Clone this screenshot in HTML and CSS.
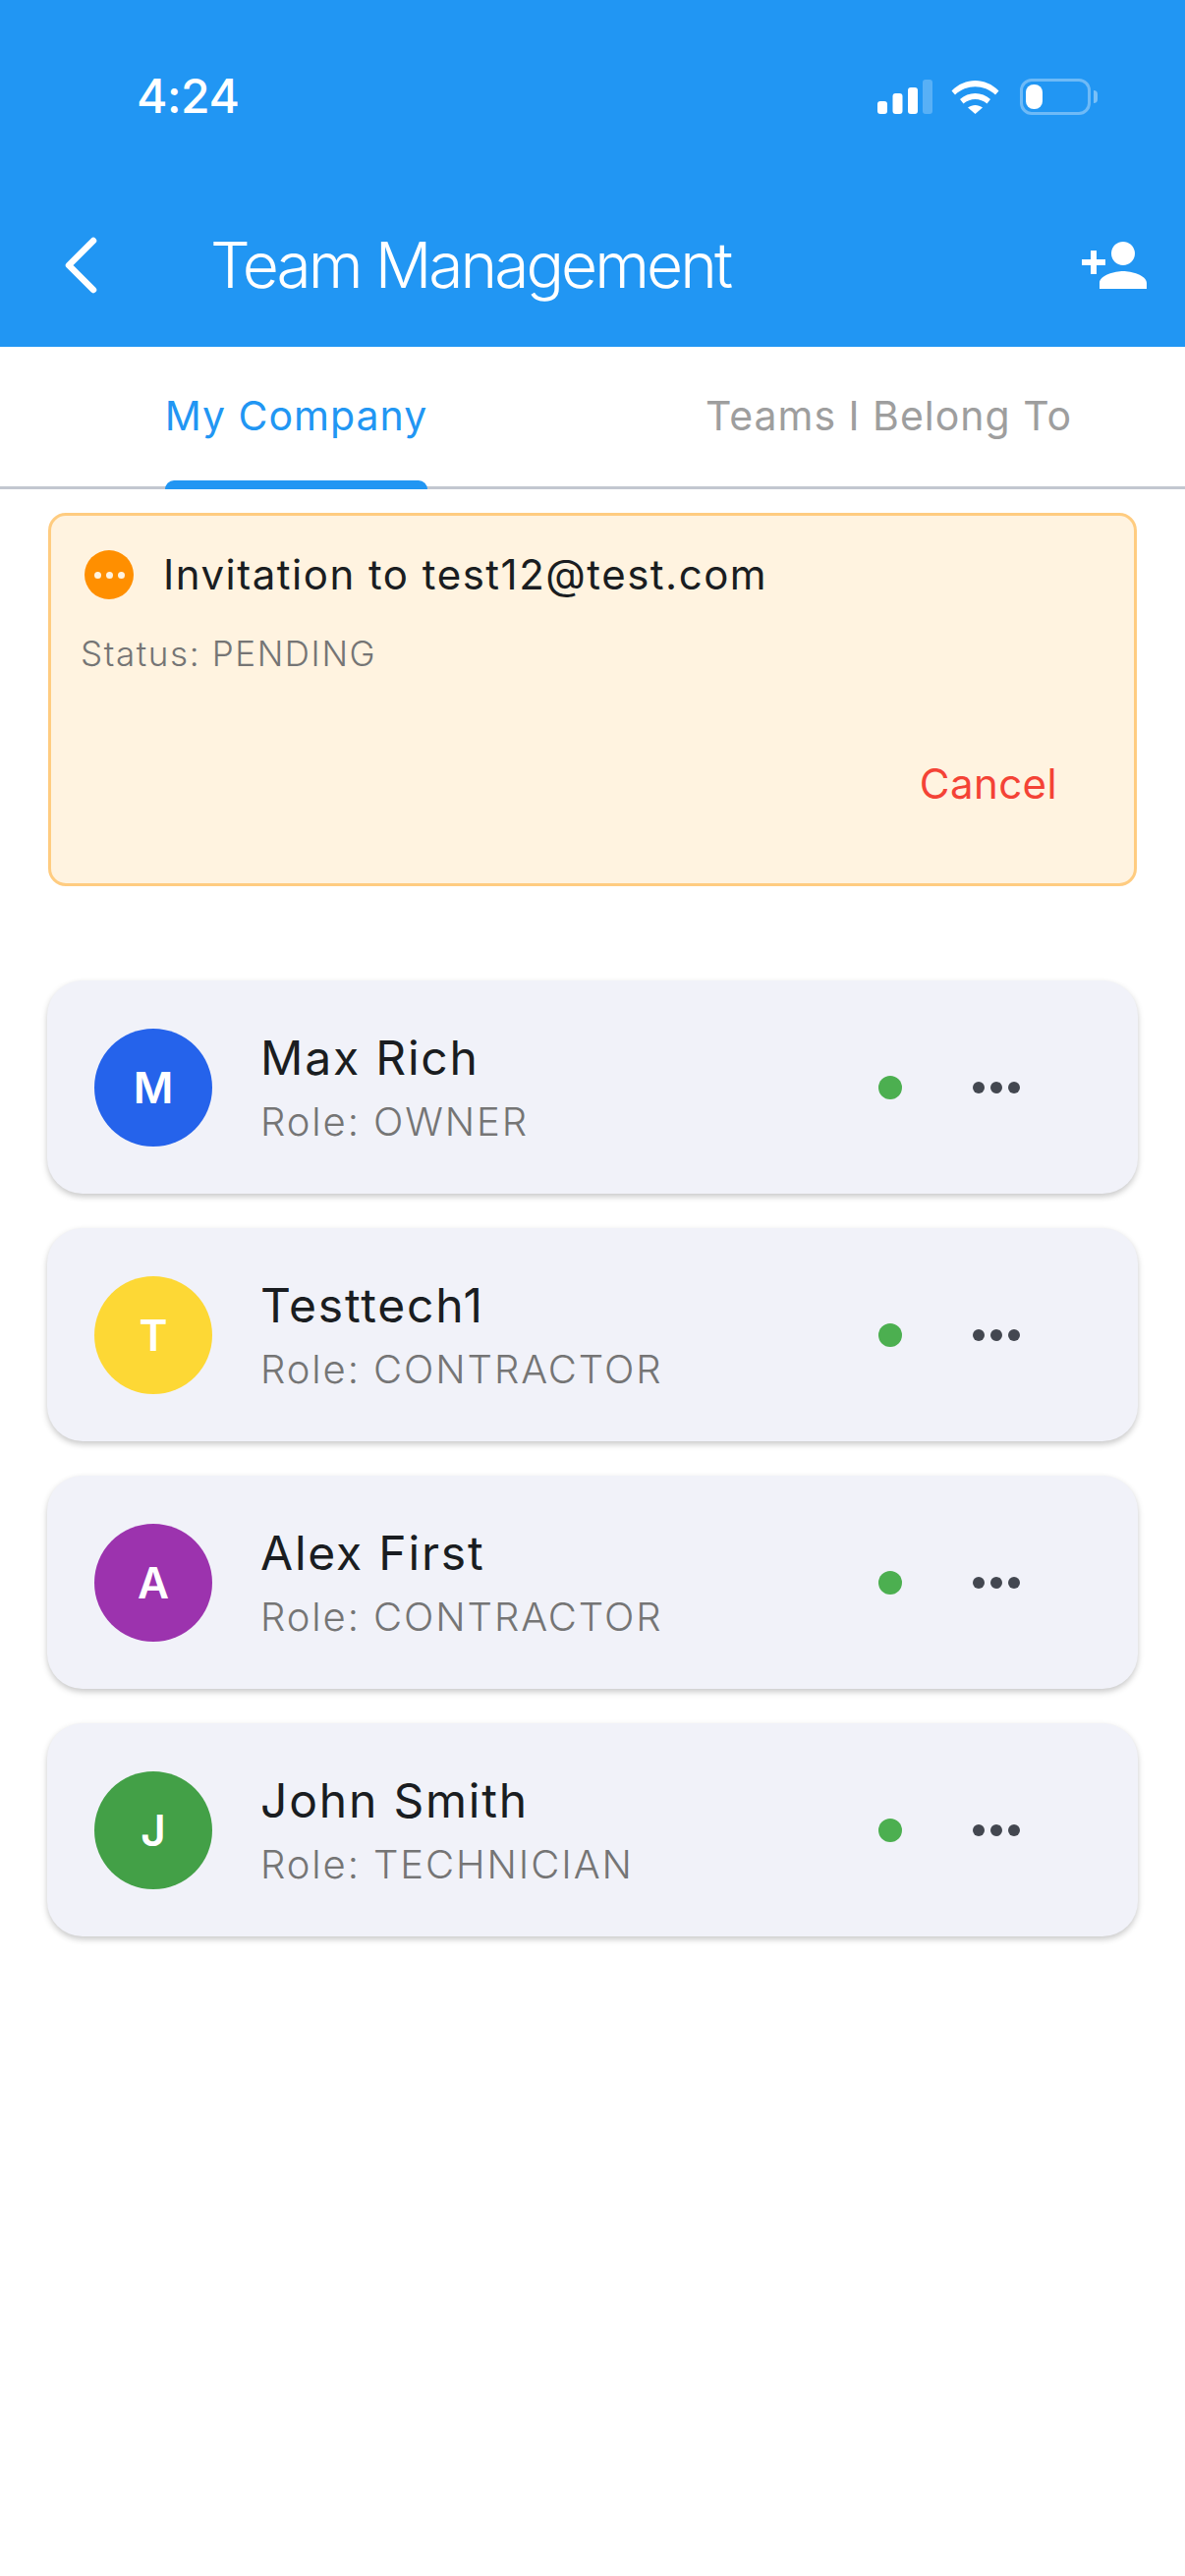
FILE: index.html
```html
<!doctype html>
<html lang="en">
  <head>
    <meta charset="UTF-8" />
    <meta name="viewport" content="width=device-width, initial-scale=1.0" />
    <title>Team Management</title>
    <link rel="stylesheet" href="styles.css">
  </head>
  <body>
    <header class="app-header">
      <div class="status-bar">
        <span class="status-time">4:24</span>
        <div class="status-icons">
          <svg class="signal-icon" width="56" height="35" viewBox="0 0 56 35">
            <rect x="0" y="22" width="10" height="13" rx="3" fill="#fff" />
            <rect x="15.5" y="14" width="10" height="21" rx="3" fill="#fff" />
            <rect x="31" y="8" width="10" height="27" rx="3" fill="#fff" />
            <rect x="46" y="0" width="10" height="35" rx="3" fill="#fff" opacity="0.25" />
          </svg>
          <svg class="wifi-icon" width="49" height="35" viewBox="0 0 49 35">
            <path d="M0.5 11.5C14 -2.5 35 -2.5 48.500 11.500L45 15.500C33.500 4.500 15.500 4.500 4 15.500Z" fill="#fff" />
            <path d="M9 20C17.500 12 31.500 12 40 20L36.500 24.500C29.500 18.500 19.500 18.500 12.500 24.500Z" fill="#fff" />
            <path d="M17 28.500C21.500 25 27.500 25 32 28.500L24.500 35Z" fill="#fff" />
          </svg>
          <div class="battery">
            <div class="battery-body">
              <div class="battery-level"></div>
            </div>
            <div class="battery-cap"></div>
          </div>
        </div>
      </div>
      <div class="nav-bar">
        <svg class="back-icon" width="36" height="58" viewBox="0 0 36 58">
          <path d="M31 4L6 29L31 54" fill="none" stroke="#fff" stroke-width="6.500" stroke-linecap="round" stroke-linejoin="round" />
        </svg>
        <h1 class="nav-title">Team Management</h1>
        <svg class="add-icon" width="72" height="72" viewBox="0 0 24 24">
          <path fill="#fff" d="M15 12c2.210 0 4-1.790 4-4s-1.790-4-4-4-4 1.790-4 4 1.790 4 4 4zm-9-2V7H4v3H1v2h3v3h2v-3h3v-2H6zm9 4c-2.670 0-8 1.340-8 4v2h16v-2c0-2.660-5.330-4-8-4z" />
        </svg>
      </div>
    </header>

    <nav class="tab-bar">
      <div class="tab tab-active"><span class="tab-label">My Company</span></div>
      <div class="tab"><span class="tab-label">Teams I Belong To</span></div>
    </nav>

    <main class="content">
      <section class="invite-card">
        <div class="invite-head">
          <div class="invite-icon">
            <span class="invite-dot"></span>
            <span class="invite-dot"></span>
            <span class="invite-dot"></span>
          </div>
          <span class="invite-title">Invitation to test12@test.com</span>
        </div>
        <p class="invite-status">Status: PENDING</p>
        <div class="invite-actions">
          <span class="invite-cancel">Cancel</span>
        </div>
      </section>

      <section class="member-list">
        <article class="member-card">
          <div class="avatar avatar-blue">M</div>
          <div class="member-info">
            <div class="member-name">Max Rich</div>
            <div class="member-role">Role: OWNER</div>
          </div>
          <span class="online-dot"></span>
          <div class="more-btn"><span></span><span></span><span></span></div>
        </article>
        <article class="member-card">
          <div class="avatar avatar-yellow">T</div>
          <div class="member-info">
            <div class="member-name">Testtech1</div>
            <div class="member-role">Role: CONTRACTOR</div>
          </div>
          <span class="online-dot"></span>
          <div class="more-btn"><span></span><span></span><span></span></div>
        </article>
        <article class="member-card">
          <div class="avatar avatar-purple">A</div>
          <div class="member-info">
            <div class="member-name">Alex First</div>
            <div class="member-role">Role: CONTRACTOR</div>
          </div>
          <span class="online-dot"></span>
          <div class="more-btn"><span></span><span></span><span></span></div>
        </article>
        <article class="member-card">
          <div class="avatar avatar-green">J</div>
          <div class="member-info">
            <div class="member-name">John Smith</div>
            <div class="member-role">Role: TECHNICIAN</div>
          </div>
          <span class="online-dot"></span>
          <div class="more-btn"><span></span><span></span><span></span></div>
        </article>
      </section>
    </main>
  </body>
</html>
```

FILE: styles.css
```css
* {
  margin: 0;
  padding: 0;
  box-sizing: border-box;
}

html,
body {
  height: 100%;
  overflow: hidden;
  background: #fff;
  font-family: "Inter", sans-serif;
}

.app-header {
  height: 353px;
  background: #2196f3;
  color: #fff;
  display: flex;
  flex-direction: column;
}

.status-bar {
  height: 234px;
  padding: 76px 89px 0 139px;
  display: flex;
  justify-content: space-between;
  align-items: flex-start;
}

.status-time {
  font-size: 48px;
  font-weight: 500;
  letter-spacing: -0.5px;
  line-height: 44px;
}

.status-icons {
  display: flex;
  align-items: center;
  gap: 19px;
  margin-top: 4px;
}

.signal-icon,
.wifi-icon {
  display: block;
}

.battery {
  display: flex;
  align-items: center;
  gap: 3px;
  margin-left: 2px;
}

.battery-body {
  width: 72px;
  height: 37px;
  border: 3px solid rgba(255, 255, 255, 0.35);
  border-radius: 12px;
  padding: 3px;
}

.battery-level {
  width: 17px;
  height: 100%;
  background: #fff;
  border-radius: 8px;
}

.battery-cap {
  width: 4px;
  height: 13px;
  background: rgba(255, 255, 255, 0.4);
  border-radius: 0 4px 4px 0;
}

.nav-bar {
  display: flex;
  align-items: flex-start;
  padding: 0 36px 0 64px;
}

.back-icon {
  margin-top: 7px;
  flex-shrink: 0;
}

.nav-title {
  flex: 1;
  margin-left: 114px;
  font-size: 64px;
  font-weight: 300;
  letter-spacing: -2.950px;
  line-height: 72px;
  white-space: nowrap;
}

.tab-bar {
  height: 145px;
  display: flex;
  border-bottom: 3px solid #c2c7d0;
}

.tab {
  width: 50%;
  display: flex;
  justify-content: center;
  color: #9e9e9e;
}

.tab-label {
  position: relative;
  display: block;
  padding-top: 45px;
  font-size: 41px;
  line-height: 50px;
  letter-spacing: 1px;
  white-space: nowrap;
}

.tab-active {
  color: #2196f3;
}

.tab-active .tab-label::after {
  content: "";
  position: absolute;
  left: 0;
  right: 0;
  top: 136px;
  height: 9px;
  background: #2196f3;
  border-radius: 9px 9px 0 0;
}

.content {
  padding: 24px 48px 0 48px;
}

.invite-card {
  height: 380px;
  margin: 0 1px;
  background: #fff3e0;
  border: 3px solid #ffcc80;
  border-radius: 18px;
  padding: 35px 31px 0 30px;
}

.invite-head {
  display: flex;
  align-items: center;
  gap: 30px;
  padding-left: 4px;
}

.invite-icon {
  width: 50px;
  height: 50px;
  border-radius: 50%;
  background: #ff8f00;
  display: flex;
  align-items: center;
  justify-content: center;
  gap: 5px;
}

.invite-dot {
  width: 7px;
  height: 7px;
  border-radius: 50%;
  background: #fff3e0;
}

.invite-title {
  font-size: 42px;
  letter-spacing: 1.500px;
  line-height: 50px;
  color: #1a1d21;
}

.invite-status {
  margin-top: 33px;
  font-size: 35px;
  font-weight: 300;
  letter-spacing: 1.600px;
  line-height: 44px;
  color: #757575;
}

.invite-actions {
  display: flex;
  justify-content: flex-end;
  padding: 86px 47px 0 0;
}

.invite-cancel {
  font-size: 42px;
  letter-spacing: 0.400px;
  line-height: 50px;
  color: #f44336;
}

.member-list {
  margin-top: 96px;
  display: flex;
  flex-direction: column;
  gap: 35px;
}

.member-card {
  height: 217px;
  background: #f1f2f9;
  border-radius: 36px;
  box-shadow: 0 3px 6px rgba(0, 0, 0, 0.22);
  padding: 0 0 0 48px;
  display: flex;
  align-items: center;
}

.avatar {
  width: 120px;
  height: 120px;
  border-radius: 50%;
  display: flex;
  align-items: center;
  justify-content: center;
  color: #fff;
  font-size: 44px;
  font-weight: 600;
  flex-shrink: 0;
}

.avatar-blue {
  background: #2563eb;
}

.avatar-yellow {
  background: #fdd835;
}

.avatar-purple {
  background: #9c33ae;
}

.avatar-green {
  background: #43a047;
}

.member-info {
  margin-left: 49px;
  flex: 1;
}

.member-name {
  font-size: 48px;
  letter-spacing: 1.800px;
  line-height: 62px;
  color: #1a1d21;
  margin-top: -1px;
}

.member-role {
  font-size: 40px;
  font-weight: 300;
  letter-spacing: 1.900px;
  line-height: 50px;
  color: #757575;
  margin-top: 9px;
}

.online-dot {
  width: 24px;
  height: 24px;
  border-radius: 50%;
  background: #4caf50;
  flex-shrink: 0;
}

.more-btn {
  display: flex;
  gap: 6px;
  margin: 0 120px 0 72px;
}

.more-btn span {
  width: 12px;
  height: 12px;
  border-radius: 50%;
  background: #434750;
}
```
